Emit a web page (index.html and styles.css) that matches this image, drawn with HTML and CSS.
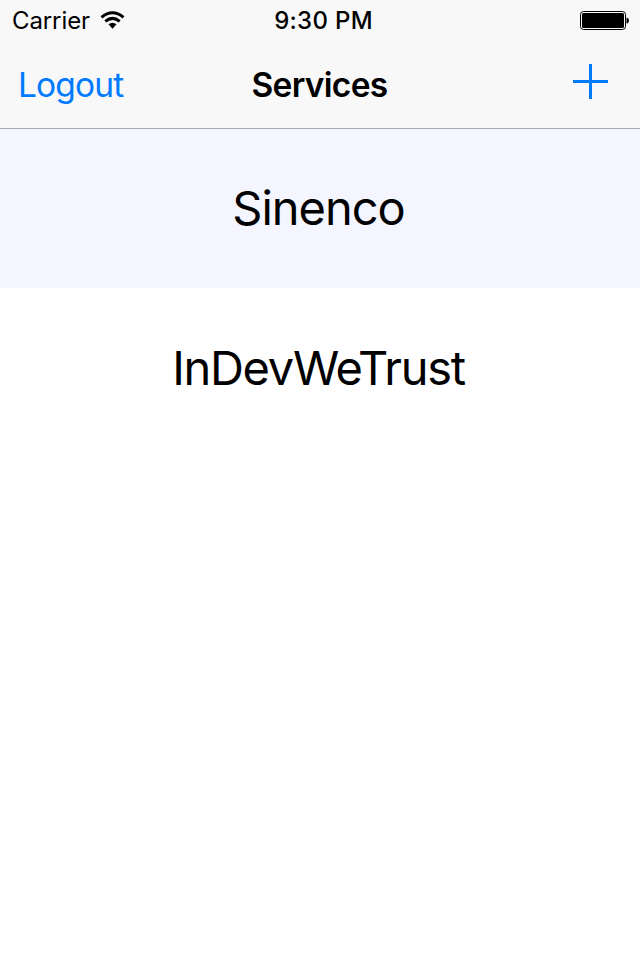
FILE: index.html
```html
<!DOCTYPE html>
<html lang="en">
<head>
<meta charset="utf-8">
<title>Services</title>
<link rel="stylesheet" href="styles.css">
</head>
<body>
<header class="header">
  <div class="status">
    <div class="carrier"><span class="carrier-name">Carrier</span>
      <svg class="wifi" width="26" height="20" viewBox="0 0 26 20"><g fill="none" stroke="#000" stroke-width="3"><path d="M1.500 7.300Q12.500-1.800 23.500 7.300"/><path d="M5.300 11.300Q12.500 5.500 19.700 11.300"/></g><path d="M8.500 14.300Q12.500 11.300 16.500 14.300L12.500 18.800Z"/></svg>
    </div>
    <div class="time">9:30 PM</div>
    <svg class="battery" width="50" height="20" viewBox="0 0 50 20"><rect x=".5" y="1.500" width="45" height="18" rx="3" fill="none" stroke="#000"/><rect x="2" y="3" width="42" height="15" rx="1.500"/><path d="M46.500 7.500Q49 8 49 10.500T46.500 13.500Z"/></svg>
  </div>
  <nav class="nav">
    <a class="logout">Logout</a>
    <h1 class="title">Services</h1>
    <svg class="add" width="35" height="35" viewBox="0 0 35 35"><path d="M0 17.500H35M17.500 0V35" stroke="#007aff" stroke-width="3"/></svg>
  </nav>
</header>
<main>
  <div class="row selected"><span class="sinenco">Sinenco</span></div>
  <div class="row"><span class="trust">InDevWeTrust</span></div>
</main>
</body>
</html>
```
FILE: styles.css
```css
body { margin: 0; background: #fff; color: #000; font-family: Inter, "Liberation Sans", sans-serif; }
.header { height: 128px; background: #f8f8f8; border-bottom: 1px solid #a9a9b4; }
.status, .nav { display: grid; grid-template-columns: 1fr auto 1fr; align-items: center; }
.status { height: 40px; padding: 0 10px 0 12px; font-size: 24px; }
.carrier { display: flex; align-items: center; gap: 10px; letter-spacing: -.1px; }
.carrier-name, .time { padding-top: 1px; }
.time { padding-left: 5px; font-weight: 550; letter-spacing: .3px; }
.battery, .add { justify-self: end; }
.nav { height: 88px; padding: 0 32px 0 18px; }
.logout { padding-top: 2px; color: #007aff; font-size: 33.5px; letter-spacing: -.85px; }
.title { margin: 0; padding: 2px 0 0 13px; font-size: 33.5px; font-weight: 600; letter-spacing: -.7px; }
.add { margin-bottom: 5px; }
.row { box-sizing: border-box; height: 160px; padding: 0 3px 2px 0; display: flex; align-items: center; justify-content: center; font-size: 47px; }
.selected { height: 159px; background: #f4f5ff; }
.sinenco { letter-spacing: -1px; }
.trust { letter-spacing: -1.3px; }
```
